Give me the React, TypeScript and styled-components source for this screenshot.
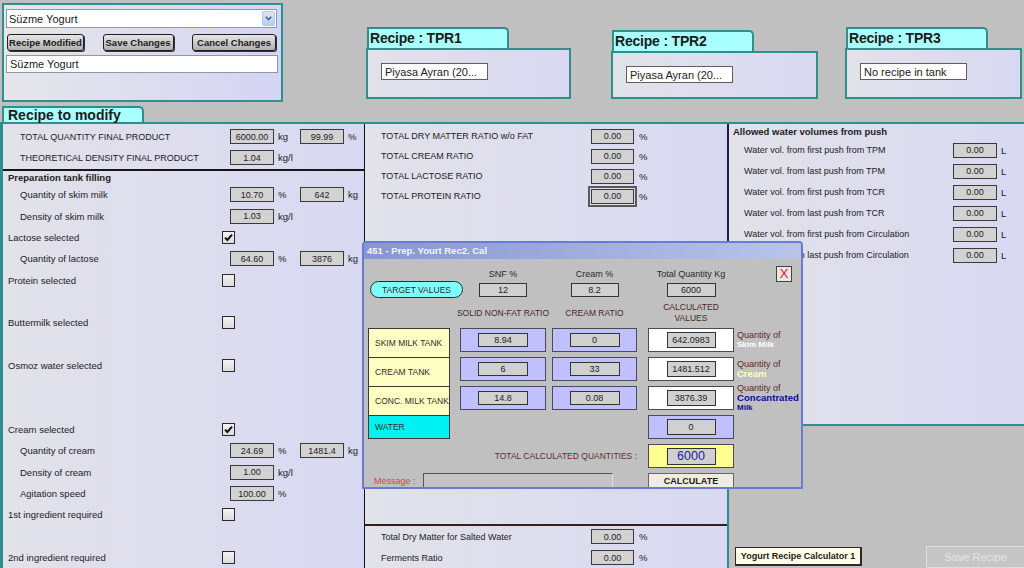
import React from "react";
import styled, { createGlobalStyle } from "styled-components";

const TEAL = "#2f8f8f";
const LAV = "linear-gradient(to right, #e2e2ea, #d8d8f2)";

const GlobalStyle = createGlobalStyle`
  html, body { margin: 0; padding: 0; background: #c0c0c0; }
  * { box-sizing: border-box; }
`;

const Screen = styled.div`
  position: relative;
  width: 1024px;
  height: 568px;
  overflow: hidden;
  background: #c0c0c0;
  font-family: "Liberation Sans", Arial, sans-serif;
  color: #1c1c1c;
`;

/* ---------- header ---------- */

const Header = styled.div`
  display: flex;
  align-items: flex-start;
  height: 106px;
`;

const RecipePicker = styled.div`
  margin: 3px 0 0 2px;
  width: 281px;
  height: 99px;
  border: 2px solid ${TEAL};
  background: linear-gradient(to right, #e6e6ea, #d4d4f4);
  padding: 4px 4px 0 2px;
  display: flex;
  flex-direction: column;
`;

const SelectBox = styled.div`
  height: 19px;
  background: #fff;
  border: 1px solid #7f9db9;
  display: flex;
  align-items: center;
  justify-content: space-between;
  padding: 0 1px 0 2px;
  font-size: 11px;
`;

const SelectArrow = styled.div`
  width: 13px;
  height: 15px;
  border: 1px solid #b6c8f2;
  border-radius: 2px;
  background: linear-gradient(#dbe6fd, #b6cbf7);
  display: flex;
  align-items: center;
  justify-content: center;
`;

const ButtonRow = styled.div`
  margin-top: 6px;
  display: flex;
  justify-content: space-between;
  padding: 0 1px;
`;

const GreyButton = styled.div<{ $w: number }>`
  width: ${(p) => p.$w}px;
  height: 17px;
  border: 1px solid #1e1e1e;
  border-radius: 3px;
  box-shadow: 1px 1px 0 #333;
  background: linear-gradient(#e6e6e6, #b0b0b0);
  font-size: 9.5px;
  font-weight: bold;
  display: flex;
  align-items: center;
  justify-content: center;
  white-space: nowrap;
`;

const TextField = styled.div<{ $w: number; $h: number }>`
  width: ${(p) => p.$w}px;
  height: ${(p) => p.$h}px;
  background: #fff;
  border: 1px solid #6a5a5a;
  font-size: 11px;
  padding-left: 3px;
  display: flex;
  align-items: center;
  white-space: nowrap;
  overflow: hidden;
`;

const NameField = styled(TextField)`
  margin-top: 4px;
  border-color: #8a9aaa;
`;

const TprGroup = styled.div<{ $gap: number; $top: number; $w: number }>`
  margin-left: ${(p) => p.$gap}px;
  margin-top: ${(p) => p.$top}px;
  width: ${(p) => p.$w}px;
  height: ${(p) => 99 - p.$top}px;
  display: flex;
  flex-direction: column;
`;

const TprTab = styled.div`
  width: 142px;
  height: 21px;
  margin-left: 1px;
  border: 2px solid ${TEAL};
  border-bottom: none;
  border-radius: 0 5px 0 0;
  background: #aaffff;
  font-size: 14px;
  font-weight: bold;
  line-height: 15px;
  padding: 2px 0 0 1px;
  white-space: nowrap;
  letter-spacing: -0.2px;
`;

const TprBox = styled.div`
  flex: 1;
  border: 2px solid ${TEAL};
  background: ${LAV};
  padding: 13px 0 0 13px;
`;

/* ---------- main area ---------- */

const TabRow = styled.div`
  height: 16px;
  padding-left: 2px;
  display: flex;
`;

const SectionTab = styled.div`
  width: 142px;
  height: 16px;
  border: 2px solid ${TEAL};
  border-bottom: none;
  border-radius: 0 5px 0 0;
  background: #aaffff;
  font-size: 14px;
  font-weight: bold;
  line-height: 14px;
  padding-left: 4px;
`;

const Main = styled.div`
  display: grid;
  grid-template-columns: 365px 362px 297px;
  height: 446px;
  border-top: 2px solid ${TEAL};
`;

const LeftPanel = styled.div`
  background: ${LAV};
  border-left: 3px solid ${TEAL};
  border-right: 1px solid #111;
`;

const TopFields = styled.div`
  padding: 2px 0 1px;
  border-bottom: 2px solid #161616;
`;

const SubHeader = styled.div<{ $h: number }>`
  height: ${(p) => p.$h}px;
  padding-left: 5px;
  font-size: 9.5px;
  font-weight: bold;
  display: flex;
  align-items: center;
`;

const FieldRow = styled.div<{ $h: number }>`
  display: grid;
  grid-template-columns: 227px 44px 26px 44px 1fr;
  align-items: center;
  height: ${(p) => p.$h}px;
`;

const RowLabel = styled.span<{ $indent?: boolean; $caps?: boolean }>`
  padding-left: ${(p) => (p.$indent ? 17 : 5)}px;
  font-size: ${(p) => (p.$caps ? 9 : 9.5)}px;
  white-space: nowrap;
`;

const ValueBox = styled.div<{ $w?: number }>`
  width: ${(p) => p.$w ?? 44}px;
  height: 15px;
  background: #d2d2d2;
  border: 1px solid #3a3a3a;
  font-size: 9px;
  display: flex;
  align-items: center;
  justify-content: center;
`;

const FocusBox = styled(ValueBox)`
  outline: 2px solid #5a5a5a;
  outline-offset: 1px;
`;

const Unit = styled.span<{ $pad?: number }>`
  padding-left: ${(p) => p.$pad ?? 4}px;
  font-size: 9.5px;
`;

const CheckBox = styled.div`
  justify-self: start;
  margin-left: -8px;
  width: 13px;
  height: 13px;
  border: 1px solid #2a2a2a;
  background: linear-gradient(#f2f2f2, #dcdcdc);
  display: flex;
  align-items: center;
  justify-content: center;
`;

const MiddlePanel = styled.div`
  display: flex;
  flex-direction: column;
  background: ${LAV};
`;

const MiddleTop = styled.div`
  flex: 1;
  padding-top: 2px;
`;

const MiddleBottom = styled.div`
  border-top: 2px solid #3a1c1c;
`;

const RatioRow = styled.div<{ $h: number }>`
  display: grid;
  grid-template-columns: 226px 43px 1fr;
  align-items: center;
  height: ${(p) => p.$h}px;
`;

const RatioLabel = styled.span`
  padding-left: 16px;
  font-size: 9px;
  white-space: nowrap;
`;

const RightColumn = styled.div`
  display: flex;
  flex-direction: column;
`;

const RightBox = styled.div`
  height: 302px;
  background: ${LAV};
  border-left: 2px solid #1e1e3c;
  border-bottom: 2px solid ${TEAL};
`;

const RightHeader = styled.div`
  height: 15.5px;
  padding-left: 4px;
  font-size: 9.5px;
  font-weight: bold;
  display: flex;
  align-items: center;
`;

const WaterRow = styled.div`
  display: grid;
  grid-template-columns: 224px 44px 1fr;
  align-items: center;
  height: 21px;
`;

const WaterLabel = styled.span`
  padding-left: 15px;
  font-size: 9px;
  white-space: nowrap;
`;

const RightFoot = styled.div`
  flex: 1;
  border-left: 2px solid ${TEAL};
  display: flex;
  justify-content: space-between;
  align-items: flex-end;
  padding-left: 6px;
`;

const CalcLaunch = styled.div`
  width: 127px;
  height: 19px;
  margin-bottom: 2px;
  background: #fffbe6;
  border: 1px solid #2a2a2a;
  border-right-width: 2px;
  border-bottom-width: 2px;
  font-size: 9px;
  font-weight: bold;
  display: flex;
  align-items: center;
  justify-content: center;
  white-space: nowrap;
`;

const SaveButton = styled.div`
  width: 98px;
  height: 22px;
  background: #c6c6c6;
  border: 1px solid #dcdcdc;
  border-right: none;
  color: #e4e4e4;
  font-size: 11px;
  display: flex;
  align-items: center;
  justify-content: center;
`;

/* ---------- dialog ---------- */

const Dialog = styled.div`
  position: absolute;
  left: 362px;
  top: 241px;
  width: 441px;
  height: 248px;
  border: 2px solid #6c7ad6;
  border-radius: 4px 4px 0 0;
  background: #c0c0c0;
  overflow: hidden;
`;

const TitleBar = styled.div`
  height: 16px;
  background: linear-gradient(to right, #8797cf, #b8c4ea);
  color: #f4f4ff;
  font-size: 9.5px;
  font-weight: bold;
  line-height: 16px;
  padding-left: 3px;
`;

const DialogBody = styled.div`
  padding: 8px 0 0 4px;
`;

/* columns: tank labels | SNF | cream | calculated | quantity captions */
const DlgRow = styled.div<{ $h: number }>`
  display: grid;
  grid-template-columns: 92px 92px 96px 89px 1fr;
  height: ${(p) => p.$h}px;
`;

const HeadStack = styled.div<{ $w: number }>`
  width: ${(p) => p.$w}px;
  display: flex;
  flex-direction: column;
  align-items: center;
  gap: 2px;
`;

const DlgCaption = styled.div`
  height: 14px;
  font-size: 9px;
  color: #2a2a2a;
  display: flex;
  align-items: center;
  justify-content: center;
  white-space: nowrap;
`;

const ColumnTitle = styled.div<{ $w: number }>`
  width: ${(p) => p.$w}px;
  display: flex;
  align-items: center;
  justify-content: center;
  font-size: 8.5px;
  color: #4a2626;
  white-space: nowrap;
  text-align: center;
  line-height: 11px;
`;

const DlgInput = styled.div<{ $w: number; $h?: number; $big?: boolean }>`
  width: ${(p) => p.$w}px;
  height: ${(p) => p.$h ?? 14}px;
  background: #d0d0d0;
  border: 1px solid #333;
  font-size: ${(p) => (p.$big ? 12.5 : 9)}px;
  color: ${(p) => (p.$big ? "#1a1aa8" : "#222")};
  display: flex;
  align-items: center;
  justify-content: center;
`;

const TargetPill = styled.div`
  align-self: end;
  width: 93px;
  height: 17px;
  margin-left: 2px;
  border: 1px solid #2a2a2a;
  border-radius: 9px;
  background: #80ffff;
  font-size: 8.5px;
  color: #2a2a2a;
  display: flex;
  align-items: center;
  justify-content: center;
  white-space: nowrap;
`;

const CloseButton = styled.div`
  justify-self: end;
  align-self: start;
  margin: -1px 9px 0 0;
  width: 16px;
  height: 16px;
  border: 1px solid #444;
  background: #e8e8e8;
  color: #e01818;
  font-size: 13px;
  line-height: 14px;
  text-align: center;
`;

const TankCell = styled.div<{ $bg: string; $last?: boolean }>`
  width: 82px;
  background: ${(p) => p.$bg};
  border: 1px solid #3a3a3a;
  border-bottom-width: ${(p) => (p.$last ? 1 : 0)}px;
  font-size: 8.5px;
  color: #3a2626;
  padding-left: 6px;
  display: flex;
  align-items: center;
  white-space: nowrap;
`;

const ValueCell = styled.div<{ $bg: string; $w: number; $h?: number; $center?: boolean }>`
  align-self: ${(p) => (p.$center ? "center" : "start")};
  width: ${(p) => p.$w}px;
  height: ${(p) => p.$h ?? 24}px;
  background: ${(p) => p.$bg};
  border: 1px solid #4a4a5e;
  display: flex;
  align-items: center;
  justify-content: center;
`;

const QtyLabel = styled.div`
  align-self: start;
  height: 24px;
  display: flex;
  flex-direction: column;
  justify-content: center;
  white-space: nowrap;
  line-height: 10px;
`;

const QtyOf = styled.span`
  font-size: 9px;
  color: #5a2a2a;
`;

const QtyName = styled.span<{ $color: string; $size: number }>`
  font-size: ${(p) => p.$size}px;
  font-weight: bold;
  color: ${(p) => p.$color};
`;

const TotalLabel = styled.div`
  grid-column: 2 / 4;
  justify-self: end;
  align-self: center;
  margin-right: 11px;
  font-size: 8.5px;
  color: #5a2e2e;
  white-space: nowrap;
`;

const MessageLine = styled.div`
  grid-column: 1 / 4;
  display: flex;
  align-items: center;
  gap: 7px;
  padding-left: 6px;
`;

const MessageLabel = styled.span`
  font-size: 9px;
  color: #e23a3a;
`;

const MessageBox = styled.div`
  width: 190px;
  height: 16px;
  background: #c4c4c4;
  border: 1px solid #555;
  border-right-color: #ddd;
  border-bottom-color: #ddd;
`;

const CalcButton = styled.div`
  width: 86px;
  height: 15px;
  background: #f0ede0;
  border: 1px solid #666;
  font-size: 9px;
  font-weight: bold;
  display: flex;
  align-items: center;
  justify-content: center;
`;

/* ---------- data ---------- */

type Field = {
  label: string;
  indent?: boolean;
  caps?: boolean;
  v1?: string;
  u1?: string;
  v2?: string;
  u2?: string;
  check?: boolean;
};

const topFields: Field[] = [
  { label: "TOTAL QUANTITY FINAL PRODUCT", indent: true, caps: true, v1: "6000.00", u1: "kg", v2: "99.99", u2: "%" },
  { label: "THEORETICAL DENSITY FINAL PRODUCT", indent: true, caps: true, v1: "1.04", u1: "kg/l" },
];

const prepFields: Field[] = [
  { label: "Quantity of skim milk", indent: true, v1: "10.70", u1: "%", v2: "642", u2: "kg" },
  { label: "Density of skim milk", indent: true, v1: "1.03", u1: "kg/l" },
  { label: "Lactose selected", check: true },
  { label: "Quantity of lactose", indent: true, v1: "64.60", u1: "%", v2: "3876", u2: "kg" },
  { label: "Protein selected", check: false },
  { label: "" },
  { label: "Buttermilk selected", check: false },
  { label: "" },
  { label: "Osmoz water selected", check: false },
  { label: "" },
  { label: "" },
  { label: "Cream selected", check: true },
  { label: "Quantity of cream", indent: true, v1: "24.69", u1: "%", v2: "1481.4", u2: "kg" },
  { label: "Density of cream", indent: true, v1: "1.00", u1: "kg/l" },
  { label: "Agitation speed", indent: true, v1: "100.00", u1: "%" },
  { label: "1st ingredient required", check: false },
  { label: "" },
  { label: "2nd ingredient required", check: false },
];

const ratios = [
  "TOTAL DRY MATTER RATIO w/o FAT",
  "TOTAL CREAM RATIO",
  "TOTAL LACTOSE RATIO",
  "TOTAL PROTEIN RATIO",
];

const waterVols = [
  "Water vol. from first push from TPM",
  "Water vol. from last push from TPM",
  "Water vol. from first push from TCR",
  "Water vol. from last push from TCR",
  "Water vol. from first push from Circulation",
  "Water vol. from last push from Circulation",
];

const tanks = [
  { name: "SKIM MILK TANK", snf: "8.94", cream: "0", calc: "642.0983", what: "Skim Milk", color: "#ffffff", size: 8 },
  { name: "CREAM TANK", snf: "6", cream: "33", calc: "1481.512", what: "Cream", color: "#ffffc0", size: 9.5 },
  { name: "CONC. MILK TANK", snf: "14.8", cream: "0.08", calc: "3876.39", what: "Concantrated", color: "#0c0c9c", size: 9.6 },
];

/* ---------- pieces ---------- */

const Check = ({ on }: { on?: boolean }) => (
  <CheckBox>
    {on && (
      <svg width="9" height="9" viewBox="0 0 9 9">
        <path d="M1 4.6 L3.4 7 L8 1.6" stroke="#111" strokeWidth="2" fill="none" />
      </svg>
    )}
  </CheckBox>
);

const FieldLine = ({ f, h }: { f: Field; h: number }) => (
  <FieldRow $h={h}>
    <RowLabel $indent={f.indent} $caps={f.caps}>{f.label}</RowLabel>
    {f.check !== undefined ? <Check on={f.check} /> : f.v1 ? <ValueBox>{f.v1}</ValueBox> : <span />}
    {f.u1 ? <Unit>{f.u1}</Unit> : <span />}
    {f.v2 ? <ValueBox>{f.v2}</ValueBox> : <span />}
    {f.u2 ? <Unit>{f.u2}</Unit> : <span />}
  </FieldRow>
);

const Tpr = ({ name, value, gap, top, w }: { name: string; value: string; gap: number; top: number; w: number }) => (
  <TprGroup $gap={gap} $top={top} $w={w}>
    <TprTab>Recipe : {name}</TprTab>
    <TprBox>
      <TextField $w={107} $h={17}>{value}</TextField>
    </TprBox>
  </TprGroup>
);

const CalculatorDialog = () => (
  <Dialog>
    <TitleBar>451 - Prep. Yourt Rec2. Cal</TitleBar>
    <DialogBody>
      <DlgRow $h={31}>
        <TargetPill>TARGET VALUES</TargetPill>
        <HeadStack $w={86}>
          <DlgCaption>SNF %</DlgCaption>
          <DlgInput $w={48}>12</DlgInput>
        </HeadStack>
        <HeadStack $w={85}>
          <DlgCaption>Cream %</DlgCaption>
          <DlgInput $w={48}>8.2</DlgInput>
        </HeadStack>
        <HeadStack $w={86}>
          <DlgCaption>Total Quantity Kg</DlgCaption>
          <DlgInput $w={49}>6000</DlgInput>
        </HeadStack>
        <CloseButton>X</CloseButton>
      </DlgRow>
      <DlgRow $h={30}>
        <span />
        <ColumnTitle $w={86}>SOLID NON-FAT RATIO</ColumnTitle>
        <ColumnTitle $w={85}>CREAM RATIO</ColumnTitle>
        <ColumnTitle $w={86}>
          CALCULATED
          <br />
          VALUES
        </ColumnTitle>
      </DlgRow>
      {tanks.map((t) => (
        <DlgRow $h={29} key={t.name}>
          <TankCell $bg="#ffffc4">{t.name}</TankCell>
          <ValueCell $bg="#c0c0ff" $w={86}>
            <DlgInput $w={50}>{t.snf}</DlgInput>
          </ValueCell>
          <ValueCell $bg="#c0c0ff" $w={85}>
            <DlgInput $w={50}>{t.cream}</DlgInput>
          </ValueCell>
          <ValueCell $bg="#ffffff" $w={86}>
            <DlgInput $w={49} $h={16}>{t.calc}</DlgInput>
          </ValueCell>
          <QtyLabel>
            <QtyOf>Quantity of</QtyOf>
            <QtyName $color={t.color} $size={t.size}>{t.what}</QtyName>
            {t.what === "Concantrated" && <QtyName $color={t.color} $size={8}>Milk</QtyName>}
          </QtyLabel>
        </DlgRow>
      ))}
      <DlgRow $h={24}>
        <TankCell $bg="#00f2f2" $last>WATER</TankCell>
        <span />
        <span />
        <ValueCell $bg="#c0c0ff" $w={86}>
          <DlgInput $w={49} $h={16}>0</DlgInput>
        </ValueCell>
      </DlgRow>
      <DlgRow $h={34}>
        <span />
        <TotalLabel>TOTAL CALCULATED QUANTITIES :</TotalLabel>
        <ValueCell $bg="#ffff90" $w={86} $center>
          <DlgInput $w={49} $h={17} $big>6000</DlgInput>
        </ValueCell>
      </DlgRow>
      <DlgRow $h={16}>
        <MessageLine>
          <MessageLabel>Message :</MessageLabel>
          <MessageBox />
        </MessageLine>
        <CalcButton>CALCULATE</CalcButton>
      </DlgRow>
    </DialogBody>
  </Dialog>
);

export default function App() {
  return (
    <Screen>
      <GlobalStyle />
      <Header>
        <RecipePicker>
          <SelectBox>
            <span>Süzme Yogurt</span>
            <SelectArrow>
              <svg width="7" height="5" viewBox="0 0 7 5">
                <path d="M0.8 0.8 L3.5 3.6 L6.2 0.8" stroke="#4d6185" strokeWidth="1.5" fill="none" />
              </svg>
            </SelectArrow>
          </SelectBox>
          <ButtonRow>
            <GreyButton $w={77}>Recipe Modified</GreyButton>
            <GreyButton $w={71}>Save Changes</GreyButton>
            <GreyButton $w={84}>Cancel Changes</GreyButton>
          </ButtonRow>
          <NameField $w={272} $h={18}>Süzme Yogurt</NameField>
        </RecipePicker>
        <Tpr name="TPR1" value="Piyasa Ayran (20..." gap={83} top={27} w={205} />
        <Tpr name="TPR2" value="Piyasa Ayran (20..." gap={40} top={30} w={207} />
        <Tpr name="TPR3" value="No recipe in tank" gap={27} top={27} w={177} />
      </Header>

      <TabRow>
        <SectionTab>Recipe to modify</SectionTab>
      </TabRow>

      <Main>
        <LeftPanel>
          <TopFields>
            {topFields.map((f) => (
              <FieldLine f={f} h={21} key={f.label} />
            ))}
          </TopFields>
          <SubHeader $h={13.33}>Preparation tank filling</SubHeader>
          {prepFields.map((f, i) => (
            <FieldLine f={f} h={21.33} key={i} />
          ))}
        </LeftPanel>

        <MiddlePanel>
          <MiddleTop>
            {ratios.map((r, i) => (
              <RatioRow $h={20} key={r}>
                <RatioLabel>{r}</RatioLabel>
                {i === 3 ? <FocusBox $w={43}>0.00</FocusBox> : <ValueBox $w={43}>0.00</ValueBox>}
                <Unit $pad={5}>%</Unit>
              </RatioRow>
            ))}
          </MiddleTop>
          <MiddleBottom>
            {["Total Dry Matter for Salted Water", "Ferments Ratio"].map((r) => (
              <RatioRow $h={21} key={r}>
                <RatioLabel>{r}</RatioLabel>
                <ValueBox $w={43}>0.00</ValueBox>
                <Unit $pad={5}>%</Unit>
              </RatioRow>
            ))}
          </MiddleBottom>
        </MiddlePanel>

        <RightColumn>
          <RightBox>
            <RightHeader>Allowed water volumes from push</RightHeader>
            {waterVols.map((w) => (
              <WaterRow key={w}>
                <WaterLabel>{w}</WaterLabel>
                <ValueBox>0.00</ValueBox>
                <Unit>L</Unit>
              </WaterRow>
            ))}
          </RightBox>
          <RightFoot>
            <CalcLaunch>Yogurt Recipe Calculator 1</CalcLaunch>
            <SaveButton>Save Recipe</SaveButton>
          </RightFoot>
        </RightColumn>
      </Main>

      <CalculatorDialog />
    </Screen>
  );
}
